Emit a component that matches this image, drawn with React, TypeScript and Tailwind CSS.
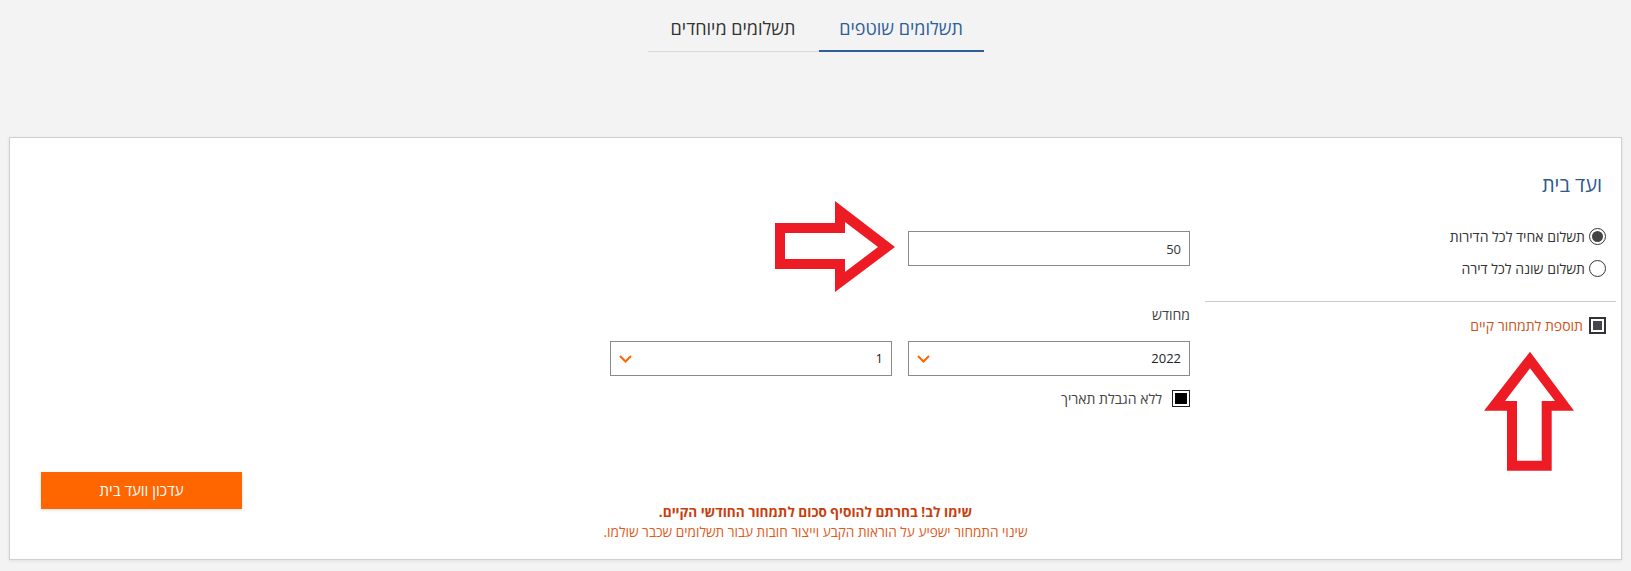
import { type ReactNode } from "react";

const font = { fontFamily: '"Open Sans", "Liberation Sans", sans-serif' };

function Tab({ label, active, width }: { label: string; active?: boolean; width: string }) {
	return (
		<div
			className={
				active
					? `${width} border-b-2 border-[#2e5f98] pt-[16px] pb-[9px] text-center text-[18px] leading-[25px] text-[#2e5f98]`
					: `${width} border-b border-[#d9d9d9] pt-[16px] pb-[10px] text-center text-[18px] leading-[25px] text-[#333]`
			}
		>
			{label}
		</div>
	);
}

function Radio({ checked, children }: { checked?: boolean; children: ReactNode }) {
	return (
		<label className="flex h-[20px] items-center gap-[4px] text-[14px] text-[#333]">
			<span className="flex h-[17px] w-[17px] items-center justify-center rounded-full border border-[#333] bg-white">
				{checked && <span className="h-[11px] w-[11px] rounded-full bg-[#444]" />}
			</span>
			{children}
		</label>
	);
}

function Select({ value }: { value: string }) {
	return (
		<div className="flex h-[35px] w-[282px] items-center justify-between border border-[#8a8a8a] px-[8px] text-[13px] text-[#222]">
			<span>{value}</span>
			<svg width="13" height="8" viewBox="0 0 13 8" fill="none">
				<polyline points="1,1 6.5,6.5 12,1" stroke="#ff6600" strokeWidth="2" />
			</svg>
		</div>
	);
}

export default function App() {
	return (
		<div dir="rtl" style={font} className="min-h-screen bg-[#f3f3f3] pb-[11px]">
			{/* Tabs */}
			<div className="flex justify-center">
				<div className="flex items-end">
					<Tab label="תשלומים שוטפים" active width="w-[165px]" />
					<Tab label="תשלומים מיוחדים" width="w-[171px]" />
				</div>
			</div>

			{/* Card */}
			<div className="relative mx-[9px] mt-[85px] h-[423px] border border-[#cfcfcf] bg-white shadow-[0_1px_3px_rgba(0,0,0,0.08)]">
				<div className="flex items-start gap-[15px] pr-[5px]">
					{/* Right column */}
					<div className="w-[411px] pt-[35px]">
						<h2 className="pr-[14px] text-[20px] leading-[24px] font-normal text-[#2d5a8c]">ועד בית</h2>
						<div className="mt-[29px] pr-[10px]">
							<Radio checked>תשלום אחיד לכל הדירות</Radio>
						</div>
						<div className="mt-[12px] pr-[10px]">
							<Radio>תשלום שונה לכל דירה</Radio>
						</div>
						<div className="mt-[23px] h-px bg-[#cccccc]" />
						<label className="mt-[13px] flex h-[20px] items-center gap-[6px] pr-[10px] text-[14px] text-[#c8561a]">
							<span className="h-[17px] w-[17px] border-2 border-[#333] p-[2px]">
								<span className="block h-full w-full bg-[#454550]" />
							</span>
							תוספת לתמחור קיים
						</label>
					</div>

					{/* Middle column */}
					<div className="w-[580px] pt-[93px]">
						<input
							readOnly
							value="50"
							className="block h-[35px] w-[282px] border border-[#8a8a8a] px-[8px] text-right text-[13px] text-[#333] outline-none"
						/>
						<div className="mt-[39px] h-[20px] text-[14px] leading-[20px] text-[#444]">מחודש</div>
						<div className="mt-[16px] flex gap-[16px]">
							<Select value="2022" />
							<Select value="1" />
						</div>
						<label className="mt-[12px] flex h-[20px] items-center gap-[10px] text-[14px] text-[#444]">
							<span className="h-[17px] w-[18px] border-[1.5px] border-[#222] p-[2px]">
								<span className="block h-full w-full bg-black" />
							</span>
							ללא הגבלת תאריך
						</label>
					</div>
				</div>

				{/* Bottom */}
				<div className="mt-[64px] grid grid-cols-[1fr_auto_1fr]">
					<div />
					<div className="pt-[30px] text-center text-[13.6px] leading-[20px]">
						<div className="font-bold text-[#c93d0c]">שימו לב! בחרתם להוסיף סכום לתמחור החודשי הקיים.</div>
						<div className="text-[#e05a1c]">שינוי התמחור ישפיע על הוראות הקבע וייצור חובות עבור תשלומים שכבר שולמו.</div>
					</div>
					<div className="justify-self-end pl-[31px]">
						<button className="h-[37px] w-[201px] bg-[#ff6600] text-[15px] text-white shadow-[0_1px_3px_rgba(0,0,0,0.15)]">
							עדכון וועד בית
						</button>
					</div>
				</div>

				{/* Annotation arrows */}
				<svg className="absolute left-[760px] top-[58px]" width="130" height="100" viewBox="0 0 130 100">
					<path
						fillRule="evenodd"
						fill="#ed1c24"
						d="M5 27 L65 27 L65 5 L125 51 L65 96 L65 73 L5 73 Z M15 37 L75 37 L75 26 L108 51 L75 76 L75 63 L15 63 Z"
					/>
				</svg>
				<svg className="absolute left-[1470px] top-[209px]" width="100" height="128" viewBox="0 0 100 128">
					<path
						fillRule="evenodd"
						fill="#ed1c24"
						d="M50 4.7 L94 63.7 L71.7 63.7 L71.7 123.7 L27 123.7 L27 63.7 L4 63.7 Z M50 21.3 L75 54 L61.7 54 L61.7 113.7 L37 113.7 L37 54 L25 54 Z"
					/>
				</svg>
			</div>
		</div>
	);
}
